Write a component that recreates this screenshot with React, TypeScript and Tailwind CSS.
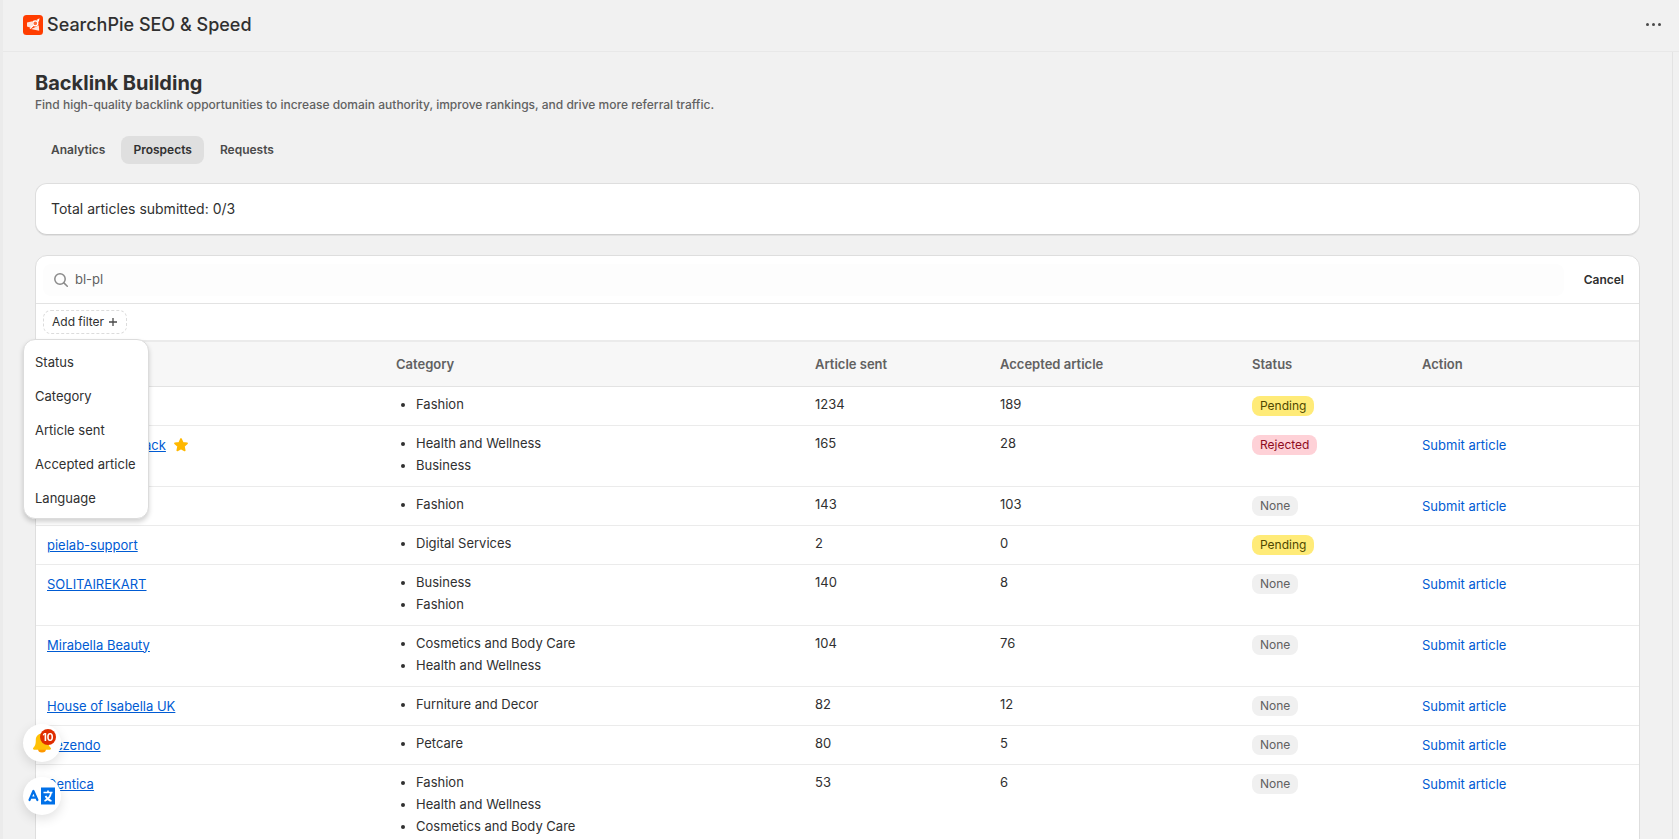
import React from "react";

type Status = "Pending" | "Rejected" | "None";

type Prospect = {
  name: string;
  starred?: boolean;
  categories: string[];
  sent: number;
  accepted: number;
  status: Status;
};

const prospects: Prospect[] = [
  { name: "bl-pl", categories: ["Fashion"], sent: 1234, accepted: 189, status: "Pending" },
  {
    name: "Wellness Feedback",
    starred: true,
    categories: ["Health and Wellness", "Business"],
    sent: 165,
    accepted: 28,
    status: "Rejected",
  },
  { name: "Moda", categories: ["Fashion"], sent: 143, accepted: 103, status: "None" },
  { name: "pielab-support", categories: ["Digital Services"], sent: 2, accepted: 0, status: "Pending" },
  { name: "SOLITAIREKART", categories: ["Business", "Fashion"], sent: 140, accepted: 8, status: "None" },
  {
    name: "Mirabella Beauty",
    categories: ["Cosmetics and Body Care", "Health and Wellness"],
    sent: 104,
    accepted: 76,
    status: "None",
  },
  { name: "House of Isabella UK", categories: ["Furniture and Decor"], sent: 82, accepted: 12, status: "None" },
  { name: "Pezendo", categories: ["Petcare"], sent: 80, accepted: 5, status: "None" },
  {
    name: "Dentica",
    categories: ["Fashion", "Health and Wellness", "Cosmetics and Body Care"],
    sent: 53,
    accepted: 6,
    status: "None",
  },
];

const columns = [
  { label: "Site", width: "w-[349px]" },
  { label: "Category", width: "w-[419px]" },
  { label: "Article sent", width: "w-[185px]" },
  { label: "Accepted article", width: "w-[252px]" },
  { label: "Status", width: "w-[170px]" },
  { label: "Action", width: "w-[228px]" },
];

const filters = ["Status", "Category", "Article sent", "Accepted article", "Language"];

const badgeStyles: Record<Status, string> = {
  Pending: "bg-[#ffeb78] text-[#4f4700]",
  Rejected: "bg-[#fed1d7] text-[#8e0b21]",
  None: "bg-[#f0f0f0] text-[#616161]",
};

const Logo = () => (
  <svg viewBox="0 0 20 20" className="size-5" aria-hidden="true">
    <rect width="20" height="20" rx="3.5" fill="#ff3d00" />
    <path d="M4 7.4 9.500 6.200v5.600L7 12.600l-3-1z" fill="#ffe3da" />
    <path d="M13.500 5 16.500 3.200 15.800 7z" fill="#fff" />
    <path d="M8 14 12.500 12l3.300-1.800.4 5.600z" fill="#ffe3da" />
    <circle cx="12.300" cy="8.300" r="2.500" fill="#ff6a3a" stroke="#fff" strokeWidth="1.300" />
    <path d="M10.400 10.200 7 13.600" stroke="#fff" strokeWidth="1.300" />
  </svg>
);

const SearchIcon = () => (
  <svg viewBox="0 0 20 20" className="size-5 shrink-0" aria-hidden="true" fill="none" stroke="#8a8a8a" strokeWidth="1.5" strokeLinecap="round">
    <circle cx="9" cy="9" r="5.2" />
    <path d="m12.9 12.9 3.4 3.4" />
  </svg>
);

const StarIcon = () => (
  <svg viewBox="0 0 20 20" className="size-4" aria-label="Featured">
    <path
      d="M10 2.400 12.300 7.200l5.300.7-3.900 3.700 1 5.200L10 14.300l-4.700 2.500 1-5.200-3.900-3.700 5.300-.7z"
      fill="#ffb800"
      stroke="#ffb800"
      strokeWidth="2"
      strokeLinejoin="round"
    />
  </svg>
);

const BellIcon = () => (
  <svg viewBox="0 0 20 22" className="h-[22px] w-5" aria-hidden="true">
    <path d="M6 17h8a4 3.6 0 0 1-8 0z" fill="#ff9800" />
    <path
      d="M10 1.6c-4 0-6.2 3-6.2 6.6 0 4.4-.8 5.6-2.5 7.6-.7 1-.2 1.9.9 1.9h15.600c1.100 0 1.600-.9.9-1.900-1.700-2-2.500-3.200-2.500-7.600 0-3.600-2.200-6.600-6.200-6.600z"
      fill="#ffc107"
    />
  </svg>
);

const TranslateIcon = () => (
  <svg viewBox="0 0 28 20" className="h-5 w-7" aria-hidden="true" fill="none">
    <path d="M1.500 14 5.400 5l4 9M3 11.600h5" stroke="#0070e8" strokeWidth="2.200" strokeLinecap="round" strokeLinejoin="round" />
    <rect x="13" y="1.500" width="14" height="17" fill="#0070e8" />
    <path d="M15.500 6.500h9M20 4.500v2M23 7c-.6 3.400-3 6.400-6.500 8M17.500 10c1.300 2.500 3.500 4.300 6 5" stroke="#fff" strokeWidth="1.700" />
  </svg>
);

const FilterMenu = () => (
  <div className="absolute -left-5 top-full z-10 flex w-[126px] flex-col rounded-xl border border-[#dcdcdc] bg-white pb-[3px] pt-[5px] shadow-[0_3px_5px_rgba(0,0,0,0.18)]">
    {filters.map((filter) => (
      <button key={filter} type="button" className="h-[34px] whitespace-nowrap px-[11px] text-left text-[13px] leading-5 text-[#303030]">
        {filter}
      </button>
    ))}
  </div>
);

const ProspectRow = ({ item }: { item: Prospect }) => (
  <tr className="border-b border-[#ebebeb] align-top">
    <td className="px-[11px] pt-2">
      <div className="flex items-center gap-[7px]">
        <a href="#" className="leading-[22px] text-[#005bd3] underline">
          {item.name}
        </a>
        {item.starred && <StarIcon />}
      </div>
    </td>
    <td className="px-[11px] pb-2.5 pt-1.5">
      <ul className="list-disc pl-5">
        {item.categories.map((category) => (
          <li key={category} className="leading-[22px]">
            {category}
          </li>
        ))}
      </ul>
    </td>
    <td className="px-[11px] pt-1.5 leading-[22px]">{item.sent}</td>
    <td className="px-[11px] pt-1.5 leading-[22px]">{item.accepted}</td>
    <td className="px-[11px] pt-[9px]">
      <span className={`block w-fit rounded-lg px-2 text-xs leading-5 ${badgeStyles[item.status]}`}>{item.status}</span>
    </td>
    <td className="px-[11px] pt-2">
      {item.status !== "Pending" && (
        <a href="#" className="leading-[22px] text-[#005bd3]">
          Submit article
        </a>
      )}
    </td>
  </tr>
);

const App = () => {
  return (
    <div className="h-screen overflow-hidden border-l-[3px] border-[#ebebeb] bg-[#f1f1f1] font-['Inter',sans-serif] text-[13px] text-[#303030]">
      <header className="flex h-[52px] items-center justify-between border-b border-[#e8e8e8] pb-0.5 pl-5 pr-[18px]">
        <div className="flex items-center gap-1">
          <Logo />
          <span className="text-lg font-medium leading-6">SearchPie SEO &amp; Speed</span>
        </div>
        <button type="button" aria-label="More actions" className="flex gap-[3px]">
          <span className="size-[3px] rounded-full bg-[#4a4a4a]" />
          <span className="size-[3px] rounded-full bg-[#4a4a4a]" />
          <span className="size-[3px] rounded-full bg-[#4a4a4a]" />
        </button>
      </header>

      <main className="mr-1.5 border-r border-[#e3e3e3] pl-8 pr-8 pt-[19px]">
        <h1 className="text-xl font-bold leading-6">Backlink Building</h1>
        <p className="text-xs font-medium leading-5 text-[#616161]">
          Find high-quality backlink opportunities to increase domain authority, improve rankings, and drive more
          referral traffic.
        </p>

        <nav className="mt-[21px] flex gap-1 pl-1 text-xs font-semibold text-[#4a4a4a]">
          <button type="button" className="h-7 rounded-lg px-3">Analytics</button>
          <button type="button" className="h-7 rounded-lg bg-[#dfdfdf] px-3 text-[#303030]">Prospects</button>
          <button type="button" className="h-7 rounded-lg px-3">Requests</button>
        </nav>

        <section className="mt-[19px] rounded-xl border border-[#dedede] border-b-[#cfcfcf] bg-white px-[15px] py-[15px] text-sm leading-5 shadow-[0_1px_0_rgba(26,26,26,0.07)]">
          Total articles submitted: 0/3
        </section>

        <section className="mt-5 rounded-t-xl border border-[#dedede] bg-white">
          <div className="flex items-center gap-5 border-b border-[#e3e3e3] pb-[7px] pl-[7px] pr-[15px] pt-2">
            <label className="flex h-8 flex-1 items-center gap-1 rounded-lg bg-[#fdfdfd] px-2">
              <SearchIcon />
              <input type="text" defaultValue="bl-pl" aria-label="Search prospects" className="w-full bg-transparent text-[13px] text-[#616161] outline-none" />
            </label>
            <button type="button" className="text-xs font-semibold leading-4">Cancel</button>
          </div>

          <div className="flex pb-px pl-[7px] pt-1.5">
            <div className="relative pb-[5px]">
              <button type="button" className="flex h-6 items-center gap-1 rounded-lg border border-dashed border-[#dcdcdc] px-2 text-xs">
                Add filter
                <svg viewBox="0 0 10 10" className="size-2.5" aria-hidden="true" stroke="#4a4a4a" strokeWidth="1.3">
                  <path d="M5 1v8M1 5h8" />
                </svg>
              </button>
              <FilterMenu />
            </div>
          </div>

          <table className="w-full table-fixed border-collapse border-t-2 border-[#ebebeb]">
            <colgroup>
              {columns.map((column) => (
                <col key={column.label} className={column.width} />
              ))}
            </colgroup>
            <thead>
              <tr className="h-[45px] border-b border-[#e3e3e3] bg-[#f7f7f7] text-left text-[#616161]">
                {columns.map((column) => (
                  <th key={column.label} className="px-[11px] pt-0.5 font-semibold">
                    {column.label}
                  </th>
                ))}
              </tr>
            </thead>
            <tbody>
              {prospects.map((item) => (
                <ProspectRow key={item.name} item={item} />
              ))}
            </tbody>
          </table>
        </section>
      </main>

      <div className="fixed bottom-6 left-[23px] z-20 flex flex-col gap-[15px]">
        <button type="button" aria-label="Notifications" className="relative flex size-[38px] items-center justify-center rounded-full bg-white shadow-[0_4px_12px_rgba(0,0,0,0.12)]">
          <BellIcon />
          <span className="absolute left-[17px] top-[5px] flex size-4 items-center justify-center rounded-full bg-[#e02d00] text-[10px] font-bold text-white">
            10
          </span>
        </button>
        <button type="button" aria-label="Translate" className="flex size-[38px] items-center justify-center rounded-full bg-white shadow-[0_4px_12px_rgba(0,0,0,0.12)]">
          <TranslateIcon />
        </button>
      </div>
    </div>
  );
};

export default App;
